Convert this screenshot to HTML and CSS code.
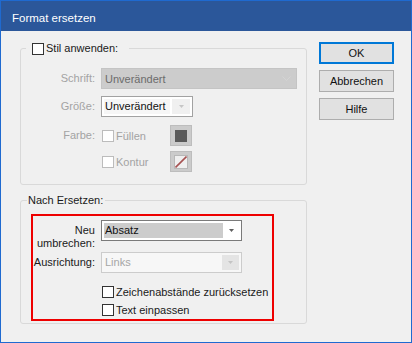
FILE: index.html
```html
<!DOCTYPE html>
<html lang="de">
<head>
<meta charset="utf-8">
<title>Format ersetzen</title>
<link rel="stylesheet" href="styles.css">
</head>
<body>
<div class="window">
  <div class="titlebar">Format ersetzen</div>
  <div class="content">
    <div class="left">
      <fieldset class="group g1">
        <legend class="legend l1"><span class="cb"></span><span>Stil anwenden:</span></legend>
        <div class="gbody1">
          <div class="row">
            <span class="lbl dis">Schrift:</span>
            <div class="combo c-schrift"><span class="val">Unverändert</span>
              <svg class="chev" width="9" height="5" viewBox="0 0 9 5"><polyline points="0.5,0.5 4.5,4.5 8.5,0.5" fill="none" stroke="#d4d4d4" stroke-width="1"/></svg>
            </div>
          </div>
          <div class="row r2">
            <span class="lbl dis">Größe:</span>
            <div class="combo c-groesse"><span class="val">Unverändert</span>
              <span class="arr"><svg width="5" height="3" viewBox="0 0 5 3"><polygon points="0,0 5,0 2.5,3" fill="#c6c6c6"/></svg></span>
            </div>
          </div>
          <div class="row r3">
            <span class="lbl dis">Farbe:</span>
            <label class="chk dis"><span class="cb dis"></span><span>Füllen</span></label>
            <span class="swatch"><span class="fill"></span></span>
          </div>
          <div class="row r4">
            <span class="lbl"></span>
            <label class="chk dis"><span class="cb dis"></span><span>Kontur</span></label>
            <span class="swatch"><span class="stroke"><svg width="12" height="12" viewBox="0 0 12 12"><line x1="0.5" y1="11.5" x2="11.5" y2="0.5" stroke="#a65252" stroke-width="1.6"/></svg></span></span>
          </div>
        </div>
      </fieldset>
      <fieldset class="group g2">
        <legend class="legend l2">Nach Ersetzen:</legend>
        <div class="redbox">
          <div class="row ra">
            <span class="lbl two">Neu<br>umbrechen:</span>
            <div class="combo c-absatz"><span class="sel">Absatz</span>
              <span class="arr2"><svg width="5" height="3" viewBox="0 0 5 3"><polygon points="0,0 5,0 2.5,3" fill="#5f5f5f"/></svg></span>
            </div>
          </div>
          <div class="row rb">
            <span class="lbl">Ausrichtung:</span>
            <div class="combo c-links"><span class="val">Links</span>
              <span class="arr3"><svg width="5" height="3" viewBox="0 0 5 3"><polygon points="0,0 5,0 2.5,3" fill="#c4c4c4"/></svg></span>
            </div>
          </div>
          <div class="checks">
            <label class="chk"><span class="cb"></span><span>Zeichenabstände zurücksetzen</span></label>
            <label class="chk"><span class="cb"></span><span>Text einpassen</span></label>
          </div>
        </div>
      </fieldset>
    </div>
    <div class="buttons">
      <button class="btn default">OK</button>
      <button class="btn">Abbrechen</button>
      <button class="btn">Hilfe</button>
    </div>
  </div>
</div>
</body>
</html>
```

FILE: styles.css
```css
html, body {
  margin: 0;
  padding: 0;
  background: #f0f0f0;
}
body {
  font-family: "Liberation Sans", Arial, sans-serif;
  font-size: 11px;
  color: #1a1a1a;
}
.window {
  width: 412px;
  height: 343px;
  box-sizing: border-box;
  border: 1px solid #1f6ad0;
  background: #f0f0f0;
  display: flex;
  flex-direction: column;
}
.titlebar {
  height: 30px;
  box-sizing: border-box;
  background: #2b579a;
  color: #ffffff;
  font-size: 11.5px;
  padding: 4px 0 0 11px;
  display: flex;
  align-items: center;
}
.content {
  display: flex;
  gap: 12px;
  padding: 11px 0 0 19px;
}
.left {
  width: 287px;
  display: flex;
  flex-direction: column;
}
.group {
  margin: 0;
  padding: 0;
  min-width: 0;
  border: 1px solid #d9d9d9;
  border-radius: 3px;
}
.g2 {
  margin-top: 9px;
}
.legend {
  height: 13px;
  line-height: 13px;
  display: flex;
  align-items: flex-start;
}
.l1 {
  margin-left: 5px;
  padding: 0 11px 0 6px;
  gap: 2px;
}
.l1 .cb {
  margin-top: 1px;
}
.l2 {
  margin-left: 6px;
  padding: 0 2px 0 1px;
}
.cb {
  display: inline-block;
  width: 12px;
  height: 12px;
  box-sizing: border-box;
  border: 1px solid #333333;
  background: #ffffff;
  flex: none;
}
.cb.dis {
  border-color: #bcbcbc;
}
.gbody1 {
  padding: 13px 0 12px 0;
}
.row {
  display: flex;
  align-items: flex-start;
}
.r2 { margin-top: 7px; }
.r3 { margin-top: 8px; }
.r4 { margin-top: 5px; }
.lbl {
  width: 74px;
  margin-right: 6px;
  text-align: right;
  line-height: 21px;
  flex: none;
}
.dis {
  color: #a3a3a3;
}
.combo {
  box-sizing: border-box;
  height: 21px;
  display: flex;
  align-items: center;
}
.c-schrift {
  width: 196px;
  background: #cccccc;
  border: 1px solid #c4c4c4;
  color: #6b6b6b;
  padding: 0 5px 0 3px;
  justify-content: space-between;
}
.c-groesse {
  width: 92px;
  background: #ffffff;
  border: 1px solid #a2a2a2;
  padding: 2px;
  align-items: stretch;
}
.c-groesse .val {
  flex: 1;
  background: #f6f6f6;
  color: #111111;
  padding-left: 1px;
  line-height: 15px;
}
.c-groesse .arr {
  width: 18px;
  margin-left: 2px;
  background: #f0f0f0;
  display: flex;
  align-items: center;
  justify-content: center;
}
.chk {
  display: flex;
  align-items: center;
  gap: 2px;
  height: 21px;
  width: 69px;
  flex: none;
}
.chk .cb {
  margin-left: 1px;
}
.swatch {
  box-sizing: border-box;
  width: 22px;
  height: 21px;
  background: #cbcbcb;
  border: 1px solid #bdbdbd;
  display: flex;
  align-items: center;
  justify-content: center;
}
.swatch .fill {
  width: 12px;
  height: 12px;
  background: #5a5a5a;
}
.swatch .stroke {
  box-sizing: border-box;
  width: 14px;
  height: 14px;
  border: 1px solid #b8b8b8;
  background: #efefef;
  display: flex;
}
.swatch .stroke svg {
  display: block;
}
.redbox {
  margin: 7px 0 2px 10px;
  width: 243px;
  box-sizing: border-box;
  border: 2px solid #ee0000;
  padding: 4px 0 0 0;
}
.redbox .lbl {
  width: 62px;
}
.lbl.two {
  line-height: 13px;
  padding-top: 4px;
}
.rb {
  margin-top: 2px;
}
.c-absatz {
  width: 141px;
  background: #ffffff;
  border: 1px solid #7a7a7a;
  padding: 2px;
  align-items: stretch;
}
.c-absatz .sel {
  width: 119px;
  background: #cccccc;
  color: #111111;
  line-height: 15px;
  padding-left: 1px;
  box-sizing: border-box;
}
.c-absatz .arr2 {
  flex: 1;
  display: flex;
  align-items: center;
  justify-content: center;
}
.c-links {
  width: 141px;
  background: #f7f7f7;
  border: 1px solid #cccccc;
  padding: 2px;
  align-items: stretch;
}
.c-links .val {
  flex: 1;
  color: #a6a6a6;
  line-height: 15px;
  padding-left: 1px;
}
.c-links .arr3 {
  width: 17px;
  background: #e4e4e4;
  display: flex;
  align-items: center;
  justify-content: center;
}
.checks {
  margin: 12px 0 2px 68px;
  display: flex;
  flex-direction: column;
  gap: 4px;
}
.checks .chk {
  height: 14px;
  width: auto;
}
.buttons {
  display: flex;
  flex-direction: column;
  gap: 6px;
}
.btn {
  width: 75px;
  height: 22px;
  box-sizing: border-box;
  margin: 0;
  padding: 0;
  font-family: inherit;
  font-size: 11px;
  color: #111111;
  background: #e1e1e1;
  border: 1px solid #adadad;
}
.btn.default {
  border: 2px solid #0078d7;
}
```
